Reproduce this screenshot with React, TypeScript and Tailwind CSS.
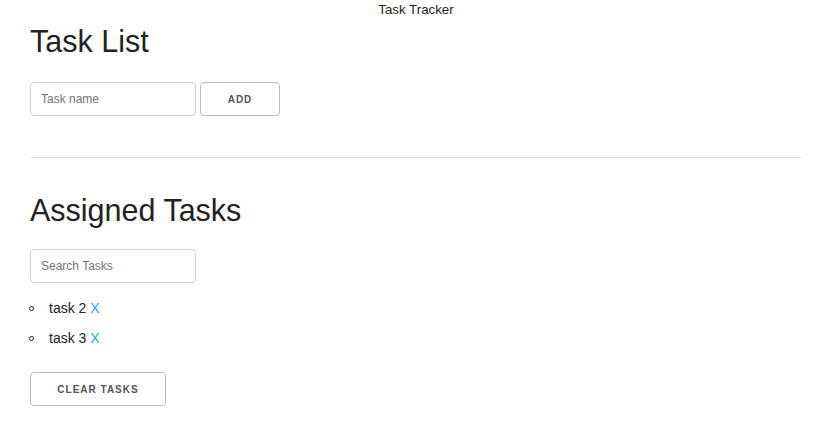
import React, { useState } from "react";

const font = { fontFamily: '"Liberation Sans", Arial, sans-serif' };

export default function App() {
  const [tasks, setTasks] = useState<string[]>(["task 2", "task 3"]);
  const [name, setName] = useState("");
  const [query, setQuery] = useState("");

  const shown = tasks.filter((t) => t.toLowerCase().includes(query.toLowerCase()));

  return (
    <div className="min-h-screen bg-white text-[#222] font-['Liberation_Sans',Arial,sans-serif]" style={font}>
      <div className="ml-[30px] mr-[12px] flex flex-col">
        <p className="text-center text-[13.3px] leading-[19px] text-[#222]">Task Tracker</p>

        <h3 className="mt-[3px] mb-[21px] text-[30.5px] leading-[39px] font-normal">Task List</h3>
        <div className="flex gap-[4px]">
          <input
            value={name}
            onChange={(e) => setName(e.target.value)}
            placeholder="Task name"
            className="h-[34px] w-[166px] rounded-[4px] border border-[#d1d1d1] px-[10px] text-[12px] outline-none placeholder:text-[#757575]"
          />
          <button
            onClick={() => {
              if (name.trim()) setTasks([...tasks, name.trim()]);
              setName("");
            }}
            className="h-[34px] w-[80px] rounded-[4px] border border-[#bbb] text-[10px] font-bold uppercase tracking-[1px] text-[#555]"
          >
            Add
          </button>
        </div>

        <hr className="mt-[41px] border-t border-[#e1e1e1]" />

        <h3 className="mt-[33px] mb-[19px] text-[30.5px] leading-[39px] font-normal">Assigned Tasks</h3>
        <input
          value={query}
          onChange={(e) => setQuery(e.target.value)}
          placeholder="Search Tasks"
          className="h-[34px] w-[166px] rounded-[4px] border border-[#d1d1d1] px-[10px] text-[12px] outline-none placeholder:text-[#757575]"
        />

        <ul className="mt-[13px] flex flex-col gap-[6px]">
          {shown.map((t) => (
            <li key={t} className="flex items-center text-[14px] leading-[24px] whitespace-pre">
              <span className="-ml-[1px] mr-[15px] h-[5px] w-[5px] rounded-full border border-[#222]" />
              {t}{" "}
              <span
                className="cursor-pointer text-[#1eaedb]"
                onClick={() => setTasks(tasks.filter((x) => x !== t))}
              >
                X
              </span>
            </li>
          ))}
        </ul>

        <button
          onClick={() => setTasks([])}
          className="mt-[22px] h-[34px] w-[136px] rounded-[4px] border border-[#bbb] text-[10px] font-bold uppercase tracking-[1px] text-[#555]"
        >
          Clear Tasks
        </button>
      </div>
    </div>
  );
}
